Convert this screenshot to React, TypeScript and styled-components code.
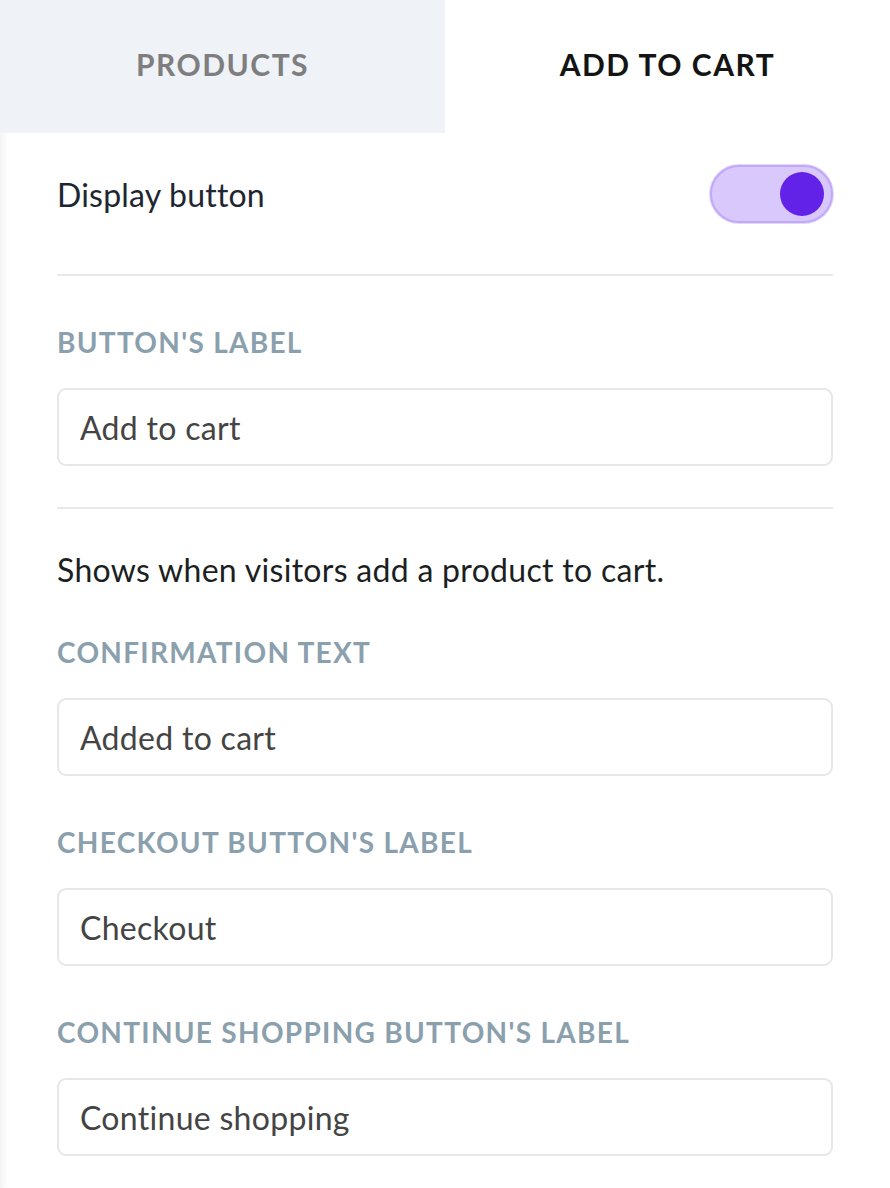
import styled, { createGlobalStyle } from 'styled-components';

const GlobalStyle = createGlobalStyle`
  html, body {
    margin: 0;
    padding: 0;
    background: #ffffff;
  }
  body {
    font-family: Lato, "Open Sans", sans-serif;
    -webkit-font-smoothing: antialiased;
  }
`;

const fields = [
  { label: 'Confirmation text', value: 'Added to cart' },
  { label: "Checkout button's label", value: 'Checkout' },
  { label: "Continue shopping button's label", value: 'Continue shopping' },
];

export default function App() {
  return (
    <>
      <GlobalStyle />
      <Panel>
        <Tabs>
          <Tab>Products</Tab>
          <Tab $active>Add to cart</Tab>
        </Tabs>

        {/* toggle */}
        <ToggleRow>
          <RowText>Display button</RowText>
          <Toggle role="switch" aria-checked="true">
            <Knob />
          </Toggle>
        </ToggleRow>

        <Divider />

        <Section $top={50} $bottom={41}>
          <Field>
            <FieldLabel>Button's label</FieldLabel>
            <TextInput defaultValue="Add to cart" />
          </Field>
        </Section>

        <Divider />

        <Section $top={43} $bottom={30}>
          <Description>Shows when visitors add a product to cart.</Description>
          <FieldList>
            {fields.map((f) => (
              <Field key={f.label}>
                <FieldLabel>{f.label}</FieldLabel>
                <TextInput defaultValue={f.value} />
              </Field>
            ))}
          </FieldList>
        </Section>
      </Panel>
    </>
  );
}

const Panel = styled.div`
  width: 890px;
  min-height: 1188px;
  background: #ffffff;
  box-shadow: inset 10px 0 10px -8px rgba(0, 0, 0, 0.07);
`;

const Tabs = styled.div`
  display: grid;
  grid-template-columns: 445px 1fr;
  height: 133px;
`;

const Tab = styled.div<{ $active?: boolean }>`
  display: flex;
  align-items: center;
  justify-content: center;
  padding-bottom: 6px;
  font-size: 30px;
  font-weight: 700;
  text-transform: uppercase;
  letter-spacing: 1.5px;
  color: ${({ $active }) => ($active ? '#141414' : '#7e7e80')};
  background: ${({ $active }) => ($active ? 'transparent' : '#eff2f6')};
`;

const ToggleRow = styled.div`
  display: flex;
  align-items: center;
  justify-content: space-between;
  padding: 32px 57px 51px;
`;

const RowText = styled.span`
  font-size: 32px;
  letter-spacing: 0.2px;
  color: #1e2631;
`;

const Toggle = styled.div`
  box-sizing: border-box;
  width: 123px;
  height: 58px;
  border-radius: 29px;
  background: #d8c8fb;
  border: 2px solid #c2a9f7;
  box-shadow: 0 0 0 1px #e2d6fc;
  display: flex;
  align-items: center;
  justify-content: flex-end;
  padding-right: 7px;
`;

const Knob = styled.span`
  width: 44px;
  height: 44px;
  border-radius: 50%;
  background: #6222e8;
`;

const Divider = styled.hr`
  margin: 0 57px;
  border: 0;
  height: 2px;
  background: #e7e9ec;
`;

const Section = styled.div<{ $top: number; $bottom: number }>`
  display: flex;
  flex-direction: column;
  padding: ${({ $top, $bottom }) => `${$top}px 57px ${$bottom}px`};
`;

const Description = styled.p`
  margin: 0 0 48px;
  font-size: 32px;
  line-height: 36px;
  letter-spacing: 0.3px;
  color: #1c1f22;
`;

const FieldList = styled.div`
  display: flex;
  flex-direction: column;
  gap: 50px;
`;

const Field = styled.label`
  display: flex;
  flex-direction: column;
  gap: 30px;
`;

const FieldLabel = styled.span`
  font-size: 28px;
  line-height: 32px;
  font-weight: 700;
  letter-spacing: 1.3px;
  text-transform: uppercase;
  color: #8aa0ad;
`;

const TextInput = styled.input`
  box-sizing: border-box;
  width: 100%;
  height: 78px;
  padding: 0 21px;
  border: 2px solid #e6e7e9;
  border-radius: 9px;
  font-family: inherit;
  font-size: 32px;
  letter-spacing: 0.3px;
  color: #444444;
  background: #ffffff;
  outline: none;
`;
